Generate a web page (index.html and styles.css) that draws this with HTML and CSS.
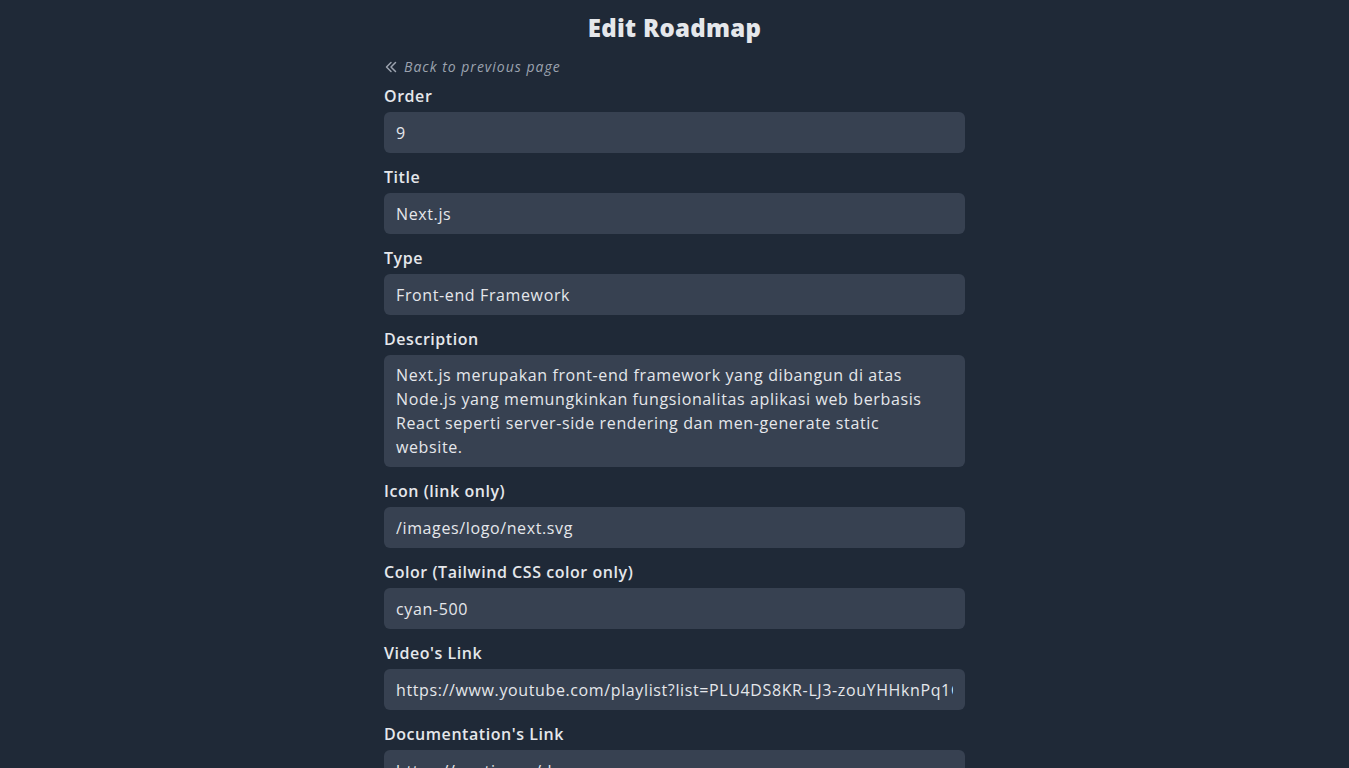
FILE: index.html
```html
<!DOCTYPE html>
<html lang="id">
<head>
<meta charset="utf-8">
<title>Edit Roadmap</title>
<link rel="stylesheet" href="styles.css">
</head>
<body>
<main class="page">
  <h1 class="title">Edit Roadmap</h1>
  <form class="form">
    <a class="back" href="#">
      <svg class="back-icon" viewBox="0 0 12 12" width="12" height="12" fill="none" stroke="currentColor" stroke-width="1.5" stroke-linecap="round" stroke-linejoin="round"><path d="M6 1.5L1.5 6 6 10.5"/><path d="M10.5 1.5L6 6l4.5 4.5"/></svg>
      <span>Back to previous page</span>
    </a>
    <label class="field">
      <span class="label">Order</span>
      <input class="input" type="text" value="9">
    </label>
    <label class="field">
      <span class="label">Title</span>
      <input class="input" type="text" value="Next.js">
    </label>
    <label class="field">
      <span class="label">Type</span>
      <input class="input" type="text" value="Front-end Framework">
    </label>
    <label class="field">
      <span class="label">Description</span>
      <textarea class="input textarea" rows="4">Next.js merupakan front-end framework yang dibangun di atas Node.js yang memungkinkan fungsionalitas aplikasi web berbasis React seperti server-side rendering dan men-generate static website.</textarea>
    </label>
    <label class="field">
      <span class="label">Icon (link only)</span>
      <input class="input" type="text" value="/images/logo/next.svg">
    </label>
    <label class="field">
      <span class="label">Color (Tailwind CSS color only)</span>
      <input class="input" type="text" value="cyan-500">
    </label>
    <label class="field">
      <span class="label">Video's Link</span>
      <input class="input" type="text" value="https://www.youtube.com/playlist?list=PLU4DS8KR-LJ3-zouYHHknPq1G">
    </label>
    <label class="field">
      <span class="label">Documentation's Link</span>
      <input class="input" type="text" value="https://nextjs.org/docs">
    </label>
  </form>
</main>
</body>
</html>
```
FILE: styles.css
```css
* { box-sizing: border-box; }
html, body {
  margin: 0;
  background: #1f2937;
  color: #e5e7eb;
  font-family: "Open Sans", "Noto Sans", sans-serif;
}
.page {
  width: 581px;
  margin: 0 auto;
  padding-top: 12px;
}
.title {
  margin: 0;
  text-align: center;
  font-size: 24px;
  line-height: 32px;
  font-weight: 800;
  letter-spacing: 0.3px;
  color: #e5e7eb;
}
.form {
  display: flex;
  flex-direction: column;
  gap: 12px;
  margin-top: 13px;
}
.back {
  display: flex;
  align-items: center;
  gap: 7px;
  color: #9ca3af;
  font-size: 14px;
  line-height: 20px;
  font-style: italic;
  letter-spacing: 1px;
  text-decoration: none;
  margin-bottom: -5px;
}
.back-icon { flex: none; margin-left: 1px; }
.field {
  display: flex;
  flex-direction: column;
  gap: 4px;
}
.label {
  font-size: 16px;
  line-height: 24px;
  font-weight: 600;
  letter-spacing: 0.55px;
  color: #e5e7eb;
}
.input {
  display: block;
  width: 100%;
  height: 41px;
  padding: 8px 12px;
  border: 0;
  border-radius: 6px;
  background: #374151;
  color: #e5e7eb;
  font-family: inherit;
  font-size: 16px;
  line-height: 24px;
  letter-spacing: 0.62px;
  outline: none;
}
.textarea {
  height: 112px;
  padding-right: 18px;
  resize: none;
  overflow: hidden;
}
```
